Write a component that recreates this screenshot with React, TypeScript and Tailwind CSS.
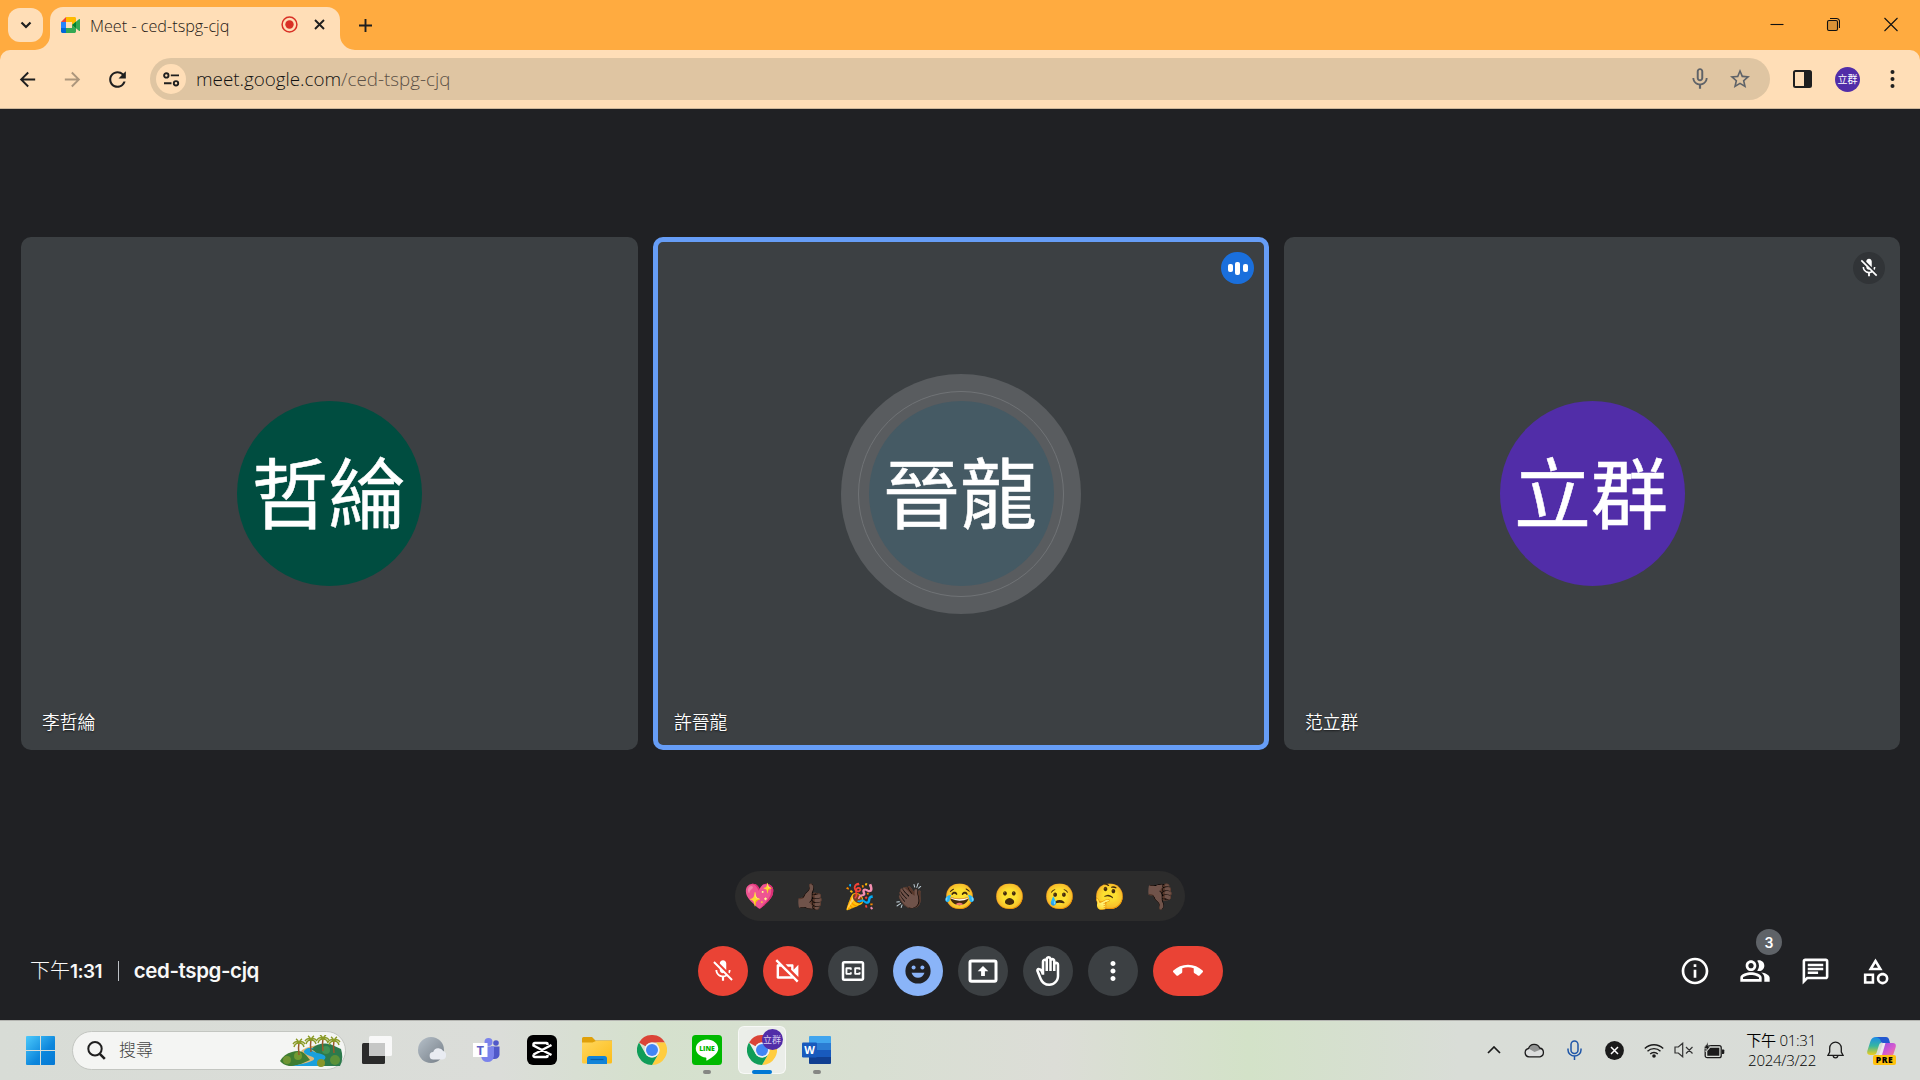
import React from "react";
import {
  MdArrowBack, MdArrowForward, MdRefresh, MdMicNone, MdStarBorder, MdMicOff, MdOutlineVideocamOff,
  MdOutlineClosedCaption, MdOutlineBackHand, MdMoreVert, MdCallEnd, MdOutlineInfo,
  MdOutlinePeopleAlt, MdOutlineChat, MdOutlineCategory,
} from "react-icons/md";

const cjk = "font-['Noto_Sans_CJK_TC',sans-serif]";
const ui = "font-['Open_Sans','Noto_Sans_CJK_TC',sans-serif]";

function MeetLogo() {
  return (
    <svg width="20" height="16" viewBox="0 0 20 16">
      <path d="M5 0 0 5h5z" fill="#ea4335" />
      <path d="M0 5h5v6H0z" fill="#2684fc" />
      <path d="M0 11v3.6C0 15.4.6 16 1.4 16H5v-5z" fill="#0066da" />
      <path d="M5 0v5h6v3l4-3.2V1.4C15 .6 14.4 0 13.6 0z" fill="#ffba00" />
      <path d="M5 16h8.6c.8 0 1.4-.6 1.4-1.4v-3.4L11 8v3H5z" fill="#34a853" />
      <path d="M11 8l7.2-5.9c.6-.4.8-.2.8.4v11c0 .6-.3.8-.8.4z" fill="#34a853" />
      <path d="M11 8l4-3.3v6.6z" fill="#00832d" />
    </svg>
  );
}

function TabStrip() {
  return (
    <div className="flex h-[50px] items-start bg-[#ffab40]">
      <div className="ml-2 mt-2 flex h-[34px] w-[35px] items-center justify-center rounded-xl bg-[#ffdeb7]">
        <svg width="12" height="8" viewBox="0 0 12 8" fill="none" stroke="#1f1f1f" strokeWidth="2.2"><path d="M1.5 1.5 6 6l4.500-4.500" /></svg>
      </div>
      <div className="relative ml-[7px] mt-[7px] flex h-[43px] w-[290px] items-start rounded-t-[13px] bg-[#ffdeb7]">
        <svg className="absolute bottom-0 -left-[15px]" width="15" height="15" viewBox="0 0 15 15"><path d="M0 15A15 15 0 0 0 15 0v15z" fill="#ffdeb7" /></svg>
        <svg className="absolute bottom-0 -right-[15px]" width="15" height="15" viewBox="0 0 15 15"><path d="M15 15A15 15 0 0 1 0 0v15z" fill="#ffdeb7" /></svg>
        <div className="ml-[11px] mt-[10px]"><MeetLogo /></div>
        <span className={`${ui} ml-[9px] mt-[7px] w-[185px] whitespace-nowrap text-[16.200px] font-[340] leading-[24px] text-[#1f1a16]`}>Meet - ced-tspg-cjq</span>
        <svg className="ml-[6px] mt-[9px]" width="17" height="17" viewBox="0 0 17 17"><circle cx="8.500" cy="8.500" r="7.400" fill="none" stroke="#d93025" strokeWidth="1.500" /><circle cx="8.500" cy="8.500" r="4.200" fill="#d93025" /></svg>
        <svg className="ml-[16px] mt-[12px]" width="11" height="11" viewBox="0 0 11 11" stroke="#1f1f1f" strokeWidth="1.900"><path d="M1 1l9 9M10 1l-9 9" /></svg>
      </div>
      <svg className="ml-[19px] mt-[19px]" width="13" height="13" viewBox="0 0 13 13" stroke="#1f1f1f" strokeWidth="1.900"><path d="M6.500 0v13M0 6.500h13" /></svg>
      <div className="ml-auto mr-[22px] mt-[17px] flex items-center">
        <svg width="14" height="15" viewBox="0 0 14 15"><path d="M.5 7.500h13" stroke="#111" strokeWidth="1.100" /></svg>
        <svg className="ml-[42px]" width="14" height="15" viewBox="0 0 14 15" fill="none" stroke="#111" strokeWidth="1.100"><rect x="1.500" y="3.500" width="10" height="10" rx="1.500" fill="#6b4a1c" fillOpacity=".25" /><path d="M4 1.500h6a3 3 0 0 1 3.500 3V11" /></svg>
        <svg className="ml-[44px]" width="14" height="15" viewBox="0 0 14 15" stroke="#111" strokeWidth="1.100"><path d="M.5 1l13 13M13.500 1l-13 13" /></svg>
      </div>
    </div>
  );
}

function Toolbar() {
  return (
    <div className="h-[59px] bg-[#ffab40]">
      <div className="flex h-full items-start rounded-t-[10px] border-b border-[#cdb79b] bg-[#ffdeb7] pt-2">
        <div className="flex h-[42px] items-center text-[#1f1f1f]">
          <MdArrowBack className="ml-[16px]" size={23} />
          <MdArrowForward className="ml-[22px] text-[#ac967c]" size={23} />
          <MdRefresh className="ml-[21px]" size={25} />
        </div>
        <div className="ml-[20px] flex h-[42px] w-[1620px] items-center rounded-full bg-[#dfc5a2] pl-[6px]">
          <div className="flex size-[30px] items-center justify-center rounded-full bg-[#ffdeb7]">
            <svg width="17" height="15" viewBox="0 0 17 15" fill="none" stroke="#1f1f1f" strokeWidth="1.900"><circle cx="3.300" cy="3.400" r="2.200" /><path d="M7.800 3.400H16M1 11.300h7.500" /><circle cx="13" cy="11.300" r="2.200" /></svg>
          </div>
          <span className={`${ui} ml-[10px] whitespace-nowrap text-[18.800px] font-[350] leading-[26px] text-[#111]`}>meet.google.com<span className="text-[#5c5146]">/ced-tspg-cjq</span></span>
          <MdMicNone className="ml-auto text-[#5f6368]" size={26} />
          <MdStarBorder className="ml-[15px] mr-[18px] text-[#5f6368]" size={24} />
        </div>
        <div className="flex h-[42px] items-center">
          <svg className="ml-[23px]" width="19" height="18" viewBox="0 0 19 18"><rect x="1" y="1" width="17" height="16" rx="1.500" fill="none" stroke="#1f1f1f" strokeWidth="2" /><path d="M11 1h7v16h-7z" fill="#1f1f1f" /></svg>
          <div className={`${cjk} ml-[23px] flex size-[25px] items-center justify-center rounded-full bg-[#512da8] text-[10px] leading-none text-white`}>立群</div>
          <svg className="ml-[30px]" width="5" height="18" viewBox="0 0 5 18" fill="#1f1f1f"><circle cx="2.500" cy="2" r="2" /><circle cx="2.500" cy="9" r="2" /><circle cx="2.500" cy="16" r="2" /></svg>
        </div>
      </div>
    </div>
  );
}

const people = [
  { name: "李哲綸", short: "哲綸", tile: "border-transparent", avatar: "bg-[#004d40]", speaking: false, muted: false },
  { name: "許晉龍", short: "晉龍", tile: "border-[#669df6]", avatar: "bg-[#455a64]", speaking: true, muted: false },
  { name: "范立群", short: "立群", tile: "border-transparent", avatar: "bg-[#512da8]", speaking: false, muted: true },
];

function Tile({ p }: { p: (typeof people)[number] }) {
  return (
    <div className={`relative flex items-center justify-center rounded-[10px] border-[5px] bg-[#3c4043] ${p.tile}`}>
      <div className={`flex size-[240px] items-center justify-center rounded-full ${p.speaking ? "bg-[#595c5f]" : ""}`}>
        <div className={`flex size-[206px] items-center justify-center rounded-full border ${p.speaking ? "border-[#707376]" : "border-transparent"}`}>
          <div className={`${cjk} flex size-[185px] items-center justify-center whitespace-nowrap rounded-full text-[77px] leading-none text-white [-webkit-text-stroke:0.500px_white] ${p.avatar}`}>
            <span className="-ml-[2px] -mt-[9px]">{p.short}</span>
          </div>
        </div>
      </div>
      <span className={`${cjk} absolute bottom-[11px] left-[16px] text-[17.800px] font-[350] leading-[26px] text-white [text-shadow:0_1px_2px_rgba(0,0,0,.6)]`}>{p.name}</span>
      {p.speaking && (
        <div className="absolute right-[10px] top-[10px] flex h-[32px] w-[33px] items-center justify-center gap-[2.500px] rounded-full bg-[#1a6fdc]">
          <i className="h-[8px] w-[5px] rounded-[2px] bg-white" /><i className="h-[13px] w-[5px] rounded-[2px] bg-white" /><i className="h-[8px] w-[5px] rounded-[2px] bg-white" />
        </div>
      )}
      {p.muted && (
        <div className="absolute right-[10px] top-[10px] flex size-[32px] items-center justify-center rounded-full bg-[#313437] text-white"><MdMicOff size={22} /></div>
      )}
    </div>
  );
}

const emojis = ["💖", "👍🏿", "🎉", "👏🏿", "😂", "😮", "😢", "🤔", "👎🏿"];

function Controls() {
  const round = "flex size-[50px] items-center justify-center rounded-full";
  return (
    <div className="flex items-center gap-[15px] text-white">
      <div className={`${round} bg-[#ea4335]`}><MdMicOff size={26} /></div>
      <div className={`${round} bg-[#ea4335]`}><MdOutlineVideocamOff size={29} /></div>
      <div className={`${round} bg-[#3c4043]`}><MdOutlineClosedCaption size={30} /></div>
      <div className={`${round} bg-[#8ab4f8]`}>
        <svg width="26" height="26" viewBox="0 0 26 26"><circle cx="13" cy="13" r="12.600" fill="#202124" /><circle cx="8.600" cy="9.600" r="2" fill="#8ab4f8" /><circle cx="17.400" cy="9.600" r="2" fill="#8ab4f8" /><path d="M6.500 14.800h13c-1 3-3.500 5-6.500 5s-5.500-2-6.500-5z" fill="#8ab4f8" /></svg>
      </div>
      <div className={`${round} bg-[#3c4043]`}>
        <svg width="30" height="24" viewBox="0 0 30 24" fill="none" stroke="#fff"><rect x="2" y="1.900" width="26" height="20.400" rx="1.500" strokeWidth="3" /><path d="M15 7l5.300 5.300h-3.400v4.700h-3.800v-4.700H9.700z" fill="#fff" stroke="none" /></svg>
      </div>
      <div className={`${round} bg-[#3c4043]`}><MdOutlineBackHand size={30} /></div>
      <div className={`${round} bg-[#3c4043]`}><MdMoreVert size={30} /></div>
      <div className="flex h-[50px] w-[70px] items-center justify-center rounded-full bg-[#ea4335]"><MdCallEnd size={30} /></div>
    </div>
  );
}

function MeetStage() {
  const slot = "relative flex w-[60px] justify-center";
  return (
    <div className="flex h-[911px] flex-col bg-[#202124] pt-[128px]">
      <div className="ml-[21px] grid h-[513px] grid-cols-[617px_616px_616px] gap-[15px]">
        {people.map((p) => <Tile key={p.name} p={p} />)}
      </div>
      <div className="mt-[121px] flex h-[50px] w-[450px] items-center self-center rounded-full bg-[#2c2c2c]">
        {emojis.map((e) => <span key={e} className="mt-px flex w-[50px] justify-center font-['Noto_Color_Emoji',sans-serif] text-[25px] leading-none">{e}</span>)}
      </div>
      <div className="mt-[25px] grid h-[50px] grid-cols-[1fr_auto_1fr] items-center">
        <div className="-mt-[1px] ml-[30px] flex items-center text-[#f8f8f8]">
          <span className={`${cjk} text-[20px] font-light leading-6`}>下午<span className="font-['Inter',sans-serif] text-[19px] font-semibold tracking-[-0.600px]">1:31</span></span>
          <span className="ml-[16px] mt-[1px] h-[20px] w-px bg-[#bdc1c6]" />
          <span className="ml-[15px] font-['Inter',sans-serif] text-[20.500px] font-semibold leading-6 tracking-[-0.400px]">ced-tspg-cjq</span>
        </div>
        <Controls />
        <div className="mr-[15px] flex items-center justify-end text-white">
          <div className={slot}><MdOutlineInfo size={32} /></div>
          <div className={slot}><MdOutlinePeopleAlt size={32} />
            <span className="absolute -top-[26px] left-[31px] flex size-[26px] items-center justify-center rounded-full bg-[#5f6368] font-['Inter',sans-serif] text-[14px] font-semibold">3</span>
          </div>
          <div className={slot}><MdOutlineChat size={31} /></div>
          <div className={slot}><MdOutlineCategory size={31} /></div>
        </div>
      </div>
    </div>
  );
}

function ChromeLogo() {
  return (
    <svg width="30" height="30" viewBox="0 0 48 48">
      <path d="M3.200 12A24 24 0 0 1 44.800 12H24a12 12 0 0 0-10.400 6z" fill="#db4437" />
      <path d="M44.800 12A24 24 0 0 1 24 48l10.400-18A12 12 0 0 0 34.400 18L31 12z" fill="#ffcd40" />
      <path d="M3.200 12A24 24 0 0 0 24 48l10.400-18a12 12 0 0 1-20.800 0z" fill="#0f9d58" />
      <circle cx="24" cy="24" r="12" fill="#f1f1f1" /><circle cx="24" cy="24" r="9.600" fill="#4285f4" />
    </svg>
  );
}

function SearchArt() {
  const palm = (x: number, y: number) => (
    <g key={x} transform={`translate(${x} ${y})`}>
      <path d="M0 0q-1 6 0 13" stroke="#9a5a2a" strokeWidth="1.500" fill="none" />
      <path d="M0 1q-3-3-6 1M0 1q-4 0-5 4M0 1q3-3 6 1M0 1q4 0 5 4M0 1q-1-3-3-4M0 1q1-3 3-4" stroke="#8a9a26" strokeWidth="1.400" fill="none" />
    </g>
  );
  return (
    <svg width="63" height="32" viewBox="0 0 63 32">
      <path d="M22 15q12-7 30-4l9 6-4 14H12z" fill="#ddb87a" />
      <path d="M0 26q4-7 12-9 9-3 14 3l4 5q-8 4-16 6H9q-6-1-9-5z" fill="#3f7d32" />
      <path d="M31 14q8-7 19-5l11 5q3 10-1 17H36q8-10-5-17z" fill="#2d7a4c" />
      <path d="M28 13q-9 4 2 8 10 3-4 7-9 2-14 3h31q-4-3 1-6 5-5-7-7-9-3-3-5z" fill="#1aa0dc" />
      <circle cx="7" cy="25" r="4" fill="#6e9532" /><circle cx="18" cy="21" r="4" fill="#739a31" /><circle cx="41" cy="28" r="4" fill="#88962a" /><circle cx="55" cy="25" r="5" fill="#5c9138" /><circle cx="46" cy="15" r="4" fill="#439153" />
      {palm(19, 7)}{palm(31, 4)}{palm(43, 3)}{palm(54, 5)}
    </svg>
  );
}

function Slot({ children, active, running }: { children: React.ReactNode; active?: boolean; running?: boolean }) {
  return (
    <div className="flex w-[55px] justify-center">
      <div className={`relative flex h-[48px] w-[48px] items-center justify-center rounded-md ${active ? "border border-white/60 bg-[#ebeee9]" : ""}`}>
        {children}
        {active && <i className="absolute -bottom-px h-[4px] w-[20px] rounded-full bg-[#0078d4]" />}
        {running && <i className="absolute bottom-0 h-[4px] w-[8px] rounded-full bg-[#858783]" />}
      </div>
    </div>
  );
}

function TaskApps() {
  return (
    <div className="flex items-center">
      <Slot>
        <svg width="30" height="28" viewBox="0 0 30 28"><rect y="7" width="23" height="21" rx="1.500" fill="#2b2b2b" /><rect x="7" width="23" height="20" rx="1.500" fill="#f8f8f8" /><path d="M7 7h16v13H7z" fill="#c6c7c6" /></svg>
      </Slot>
      <Slot>
        <svg width="28" height="28" viewBox="0 0 28 28"><defs><linearGradient id="orb" x2="1" y2="1"><stop stopColor="#b6c0c9" /><stop offset="1" stopColor="#747d86" /></linearGradient></defs><circle cx="13" cy="14" r="13" fill="url(#orb)" /><path d="M15.500 23.500a3.700 3.700 0 0 1-.3-7.400 5.500 5.500 0 0 1 10-1A4.300 4.300 0 0 1 24 23.500z" fill="#e9ecf2" /></svg>
      </Slot>
      <Slot>
        <svg width="27" height="26" viewBox="0 0 27 26"><circle cx="15.500" cy="5" r="4" fill="#7b83eb" /><circle cx="23" cy="6" r="2.800" fill="#5059c9" /><path d="M18 9.500h8.500V18q-1 4-5 4H18z" fill="#5059c9" /><path d="M8 9.500h13V19q-1 6-6.500 6T8 19z" fill="#7b83eb" /><rect y="6" width="14.500" height="14" fill="#fff" /><text x="3.500" y="18" fontSize="13" fontWeight="700" fontFamily="Open Sans" fill="#5b5fc7">T</text></svg>
      </Slot>
      <Slot>
        <svg width="30" height="30" viewBox="0 0 30 30"><rect width="30" height="30" rx="6" /><path d="M20.500 10V8.800Q20.500 8 19.500 8H8Q6.500 8 6.500 9.500v1L24.500 20M6.500 19.500 24.500 10M6.500 19.500v1Q6.500 22 8 22h11.500q1 0 1-.8V20" fill="none" stroke="#fff" strokeWidth="2.500" /></svg>
      </Slot>
      <Slot>
        <svg width="30" height="27" viewBox="0 0 30 27"><defs><linearGradient id="fold" x2="1" y2="1"><stop stopColor="#ffd75e" /><stop offset="1" stopColor="#fcbc19" /></linearGradient></defs><path d="M0 1.500Q0 0 1.500 0H10l3.500 3.500H30V10H0z" fill="#dfa00a" /><path d="M0 5.500h10.500L14 4h16v21q0 1.500-1.500 1.500h-27Q0 26.500 0 25z" fill="url(#fold)" /><path d="M5 27v-5.500Q5 19 7.500 19h15q2.500 0 2.500 2.500V27z" fill="#1183d8" /><path d="M8.500 22.500h13" stroke="#075ea8" strokeWidth="1.200" /></svg>
      </Slot>
      <Slot><ChromeLogo /></Slot>
      <Slot running>
        <svg width="30" height="30" viewBox="0 0 30 30"><rect width="30" height="30" rx="3.500" fill="#00b900" /><path d="M15 4.500c6.200 0 11.200 4 11.200 9 0 2-.8 3.800-2.400 5.600-2.300 2.600-7.400 5.900-8.600 6.400-1.100.4-1-.3-.9-.7l.1-1.200c0-.4 0-.9-.7-1C8.200 21.900 3.800 18.100 3.800 13.500c0-5 5-9 11.200-9z" fill="#fff" /><text x="15" y="16.200" textAnchor="middle" fontSize="6.800" fontWeight="800" fontFamily="Open Sans" fill="#00b900">LINE</text></svg>
      </Slot>
      <Slot active>
        <ChromeLogo />
        <span className={`${cjk} absolute right-[2px] top-[2px] flex size-[21px] items-center justify-center rounded-full bg-[#512da8] text-[9px] leading-none text-[#d8cdf0]`}>立群</span>
      </Slot>
      <Slot running>
        <svg width="29" height="28" viewBox="0 0 29 28"><path d="M7 1q0-1 1-1h20q1 0 1 1v6H7z" fill="#41a5ee" /><path d="M7 7h22v7H7z" fill="#2b7cd3" /><path d="M7 14h22v7H7z" fill="#185abd" /><path d="M7 21h22v6q0 1-1 1H8q-1 0-1-1z" fill="#103f91" /><rect y="6.500" width="15" height="15" rx="1.200" fill="#185abd" /><text x="7.500" y="18" textAnchor="middle" fontSize="11" fontWeight="700" fontFamily="Open Sans" fill="#fff">W</text></svg>
      </Slot>
    </div>
  );
}

function Tray() {
  const s = "flex w-[40px] justify-center";
  const t = "flex w-[30px] justify-center";
  return (
    <div className="ml-auto flex items-center text-[#1b1b1b]">
      <div className={s}><svg width="14" height="8" viewBox="0 0 14 8" fill="none" stroke="#1b1b1b" strokeWidth="1.700"><path d="M1 7l6-6 6 6" /></svg></div>
      <div className={s}><svg width="21" height="15" viewBox="0 0 21 15"><path d="M5 13.800a4.200 4.200 0 0 1-.5-8.300A6 6 0 0 1 15.700 5a4.500 4.500 0 0 1 .3 8.800z" fill="#dcdedd" /><path d="M4.500 5.500A6 6 0 0 1 15.700 5l2.300 1-7.500 3z" fill="#929493" /><path d="M5 13.800a4.200 4.200 0 0 1-.5-8.300A6 6 0 0 1 15.700 5a4.500 4.500 0 0 1 .3 8.800z" fill="none" stroke="#1b1b1b" strokeWidth="1.300" /></svg></div>
      <div className={s}><svg width="15" height="20" viewBox="0 0 15 20" fill="none" stroke="#1f56a8" strokeWidth="1.500"><rect x="4" y="1" width="7" height="12.500" rx="3.500" /><path d="M1 8.500v1.500a6.500 6 0 0 0 13 0V8.500M7.500 16v4" /></svg></div>
      <div className={s}><svg width="19" height="19" viewBox="0 0 19 19"><circle cx="9.500" cy="9.500" r="9.400" fill="#1b1b1b" /><path d="M6 6l7 7M13 6l-7 7" stroke="#fff" strokeWidth="1.500" /></svg></div>
      <div className={`${t} ml-[5px]`}><svg width="20" height="15" viewBox="0 0 20 15" fill="none" stroke="#1b1b1b" strokeWidth="1.400"><path d="M.8 5.500a13 13 0 0 1 18.400 0M3.500 8.300a9.200 9.200 0 0 1 13 0M6.200 11a5.400 5.400 0 0 1 7.600 0" /><circle cx="10" cy="13" r="1.800" fill="#1b1b1b" stroke="none" /></svg></div>
      <div className={t}><svg width="20" height="16" viewBox="0 0 20 16" fill="none" stroke="#333" strokeWidth="1.200"><path d="M1 5h3.300L8.700 1.200v13.600L4.300 11H1zM12 5l6.500 6.500M18.500 5L12 11.500" /></svg></div>
      <div className={t}><svg width="21" height="17" viewBox="0 0 21 17"><rect x="1.200" y="3.700" width="16" height="12" rx="2" fill="none" stroke="#1b1b1b" strokeWidth="1.300" /><path d="M3.300 13.700V9l3-3.200h9v7.900z" fill="#1b1b1b" /><path d="M18 7.500h1.500q.8 0 .8.800v2.800q0 .8-.8.800H18z" fill="#1b1b1b" /><path d="M4 0L0 6.500h2.500L1.500 10l5-6H4z" fill="#1b1b1b" stroke="#dadcd8" strokeWidth=".5" /></svg></div>
      <div className={`${ui} -mt-px ml-[13px] flex w-[74px] flex-col items-end text-[15.100px] font-[350] leading-[20px] tracking-[-0.300px] text-black`}>
        <div className="whitespace-nowrap">下午 01:31</div><div className="whitespace-nowrap">2024/3/22</div>
      </div>
      <svg className="ml-[11px]" width="17" height="18" viewBox="0 0 17 18" fill="none" stroke="#1b1b1b" strokeWidth="1.300"><path d="M1 14.300h15L14.300 11V7a5.800 5.800 0 0 0-11.600 0v4zM6.200 14.500a2.300 2.300 0 0 0 4.600 0" /></svg>
      <div className="relative ml-[23px] mr-[23px] h-[30px] w-[30px] self-center">
        <svg width="29" height="26" viewBox="0 0 29 26"><defs><linearGradient id="cpa" x2="0" y2="1"><stop stopColor="#1b8be8" /><stop offset=".5" stopColor="#37b6a0" /><stop offset="1" stopColor="#f2cf18" /></linearGradient><linearGradient id="cpb" x2="1" y2="1"><stop stopColor="#8c4ce8" /><stop offset=".6" stopColor="#d95ccd" /><stop offset="1" stopColor="#f58a6c" /></linearGradient></defs><path d="M3.500 6Q5 2 9 2h8l-3 6q-1.500 0-2 2L9.500 18Q9 20 6 20H3.500Q-.5 20 .3 16z" fill="url(#cpa)" /><path d="M9 2h10q2.500 0 3.200 3l.8 3h-7q-2 0-2.500-2.500T9 2z" fill="#2358d0" /><path d="M17.500 8H26q3.500 0 2.700 4L26.500 19q-1 3-4 3H11q2-.5 2.700-4l2.300-8q.500-2 1.500-2z" fill="url(#cpb)" /><path d="M16 8h2.500l-3.500 12H12z" fill="#efe9ef" /></svg>
        <span className={`${ui} absolute bottom-0 left-[6px] flex h-[10px] w-[23px] items-center justify-center rounded-[2px] bg-[#ffc20e] text-[8.500px] font-extrabold leading-none tracking-[0.500px] text-black`}>PRE</span>
      </div>
    </div>
  );
}

function Taskbar() {
  return (
    <div className="flex h-[60px] items-center border-t border-[#b4b5b1] bg-[linear-gradient(90deg,#d8dcd6_0%,#dbddd9_26%,#d5e1cd_34%,#d8dfd2_45%,#dcddd7_55%,#d3e2c8_65%,#d9ddd7_76%,#d9dcd8_100%)] pb-px">
      <svg className="ml-[26px]" width="29" height="29" viewBox="0 0 29 29"><defs><linearGradient id="win" x2="1" y2="1"><stop stopColor="#4cc9fb" /><stop offset=".6" stopColor="#0c86dc" /><stop offset="1" stopColor="#0478d4" /></linearGradient></defs><path d="M1 0h13v14H0V1q0-1 1-1zM15 0h13q1 0 1 1v13H15zM0 15h14v14H1q-1 0-1-1zM15 15h14v13q0 1-1 1H15z" fill="url(#win)" /></svg>
      <div className="ml-[17px] mr-[3px] flex h-[39px] w-[274px] items-center rounded-full border border-[#c3c6c1] bg-[#f4f5f3]">
        <svg className="ml-[14px]" width="19" height="19" viewBox="0 0 19 19" fill="none" stroke="#1f1f1f" strokeWidth="2"><circle cx="8" cy="7.800" r="6.700" /><path d="M12.800 12.800l5 5" strokeWidth="2.600" /></svg>
        <span className={`${cjk} -mt-[2px] ml-[13px] text-[17px] font-light leading-6 text-[#444]`}>搜尋</span>
        <span className="ml-auto mr-[2px] mt-[1px]"><SearchArt /></span>
      </div>
      <TaskApps />
      <Tray />
    </div>
  );
}

export default function App() {
  return (
    <div className="h-[1080px] w-[1920px] overflow-hidden">
      <TabStrip />
      <Toolbar />
      <MeetStage />
      <Taskbar />
    </div>
  );
}
